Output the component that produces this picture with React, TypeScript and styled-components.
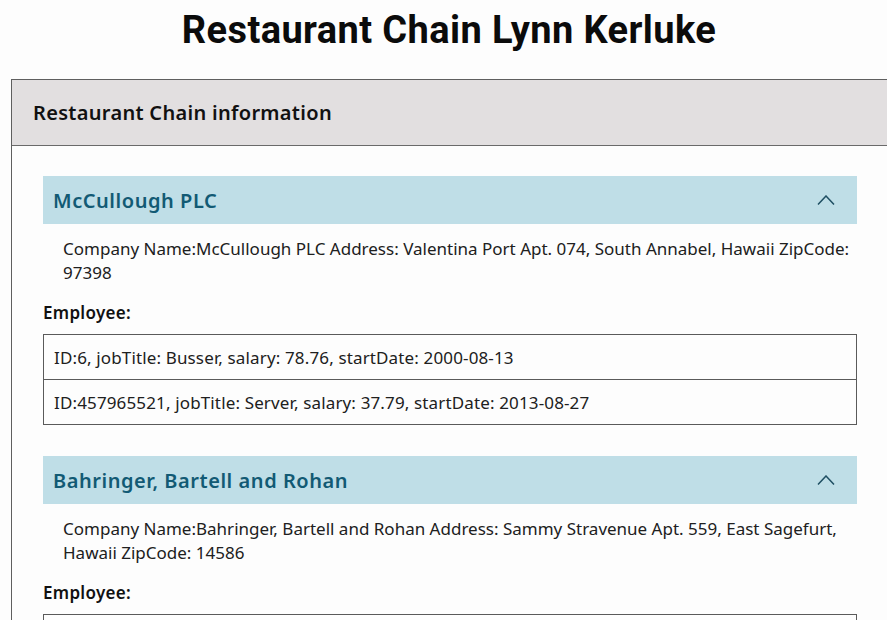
import React from "react";
import styled, { createGlobalStyle } from "styled-components";

const Global = createGlobalStyle`
  html, body { margin: 0; padding: 0; background: #fdfdfd; overflow: hidden; }
  body { font-family: "Noto Sans", "Liberation Sans", sans-serif; color: #1d1d1d; }
`;

const Page = styled.div`
  width: 887px;
  padding-left: 11px;
  box-sizing: border-box;
`;

const Title = styled.h1`
  margin: 0;
  height: 79px;
  padding-top: 8px;
  box-sizing: border-box;
  width: 876px;
  text-align: center;
  font-family: Roboto, "Liberation Sans", sans-serif;
  font-weight: 700;
  font-size: 38px;
  line-height: 44px;
  color: #0b0b0b;
  letter-spacing: 0.4px;
`;

const Card = styled.section`
  width: 878px;
  border: 1px solid #5f5f5f;
  box-sizing: border-box;
`;

const CardHeader = styled.div`
  height: 65px;
  background: #e2dfe0;
  border-bottom: 1px solid #6a6a6a;
  display: flex;
  align-items: center;
  padding-left: 21px;
  font-weight: 600;
  font-size: 20px;
  letter-spacing: 0.3px;
  color: #111;
`;

const CardBody = styled.div`
  padding: 30px 31px 0 31px;
  display: flex;
  flex-direction: column;
  gap: 31px;
`;

const Company = styled.div`
  display: flex;
  flex-direction: column;
`;

const AccHeader = styled.div`
  height: 48px;
  background: #bfdee7;
  display: flex;
  align-items: center;
  justify-content: space-between;
  padding: 0 22px 0 10px;
  font-size: 20px;
  font-weight: 600;
  letter-spacing: 0.55px;
  color: #125a74;
`;

const AccBody = styled.p`
  margin: 13px 0 0;
  padding: 0 0 0 20px;
  font-size: 17px;
  line-height: 24px;
  color: #202020;
  letter-spacing: 0;
`;

const Label = styled.div`
  margin-top: 16px;
  font-size: 17px;
  line-height: 24px;
  font-weight: 600;
  letter-spacing: 0.3px;
  color: #111;
`;

const List = styled.ul`
  list-style: none;
  margin: 9px 0 0;
  padding: 0;
`;

const Row = styled.li`
  height: 46px;
  border: 1px solid #5a5a5a;
  box-sizing: border-box;
  display: flex;
  align-items: center;
  padding-left: 10px;
  font-size: 17px;
  color: #202020;
  letter-spacing: 0.14px;
  & + & { border-top: none; height: 45px; }
`;

const Chevron = () => (
  <svg width="18" height="10" viewBox="0 0 18 10" fill="none">
    <polyline points="1,9.5 9,1 17,9.5" stroke="#1f4f63" strokeWidth="1.5" />
  </svg>
);

type Emp = { id: string; job: string; salary: string; date: string };
type Co = { name: string; address: string; zip: string; employees: Emp[] };

const companies: Co[] = [
  {
    name: "McCullough PLC",
    address: "Valentina Port Apt. 074, South Annabel, Hawaii",
    zip: "97398",
    employees: [
      { id: "6", job: "Busser", salary: "78.76", date: "2000-08-13" },
      { id: "457965521", job: "Server", salary: "37.79", date: "2013-08-27" },
    ],
  },
  {
    name: "Bahringer, Bartell and Rohan",
    address: "Sammy Stravenue Apt. 559, East Sagefurt, Hawaii",
    zip: "14586",
    employees: [
      { id: "12", job: "Host", salary: "41.20", date: "2005-02-11" },
    ],
  },
];

export default function App() {
  return (
    <Page>
      <Global />
      <Title>Restaurant Chain Lynn Kerluke</Title>
      <Card>
        <CardHeader>Restaurant Chain information</CardHeader>
        <CardBody>
          {companies.map((c) => (
            <Company key={c.name}>
              <AccHeader>
                <span>{c.name}</span>
                <Chevron />
              </AccHeader>
              <AccBody>
                Company Name:{c.name} Address: {c.address} ZipCode: {c.zip}
              </AccBody>
              <Label>Employee:</Label>
              <List>
                {c.employees.map((e) => (
                  <Row key={e.id}>
                    ID:{e.id}, jobTitle: {e.job}, salary: {e.salary}, startDate: {e.date}
                  </Row>
                ))}
              </List>
            </Company>
          ))}
        </CardBody>
      </Card>
    </Page>
  );
}
